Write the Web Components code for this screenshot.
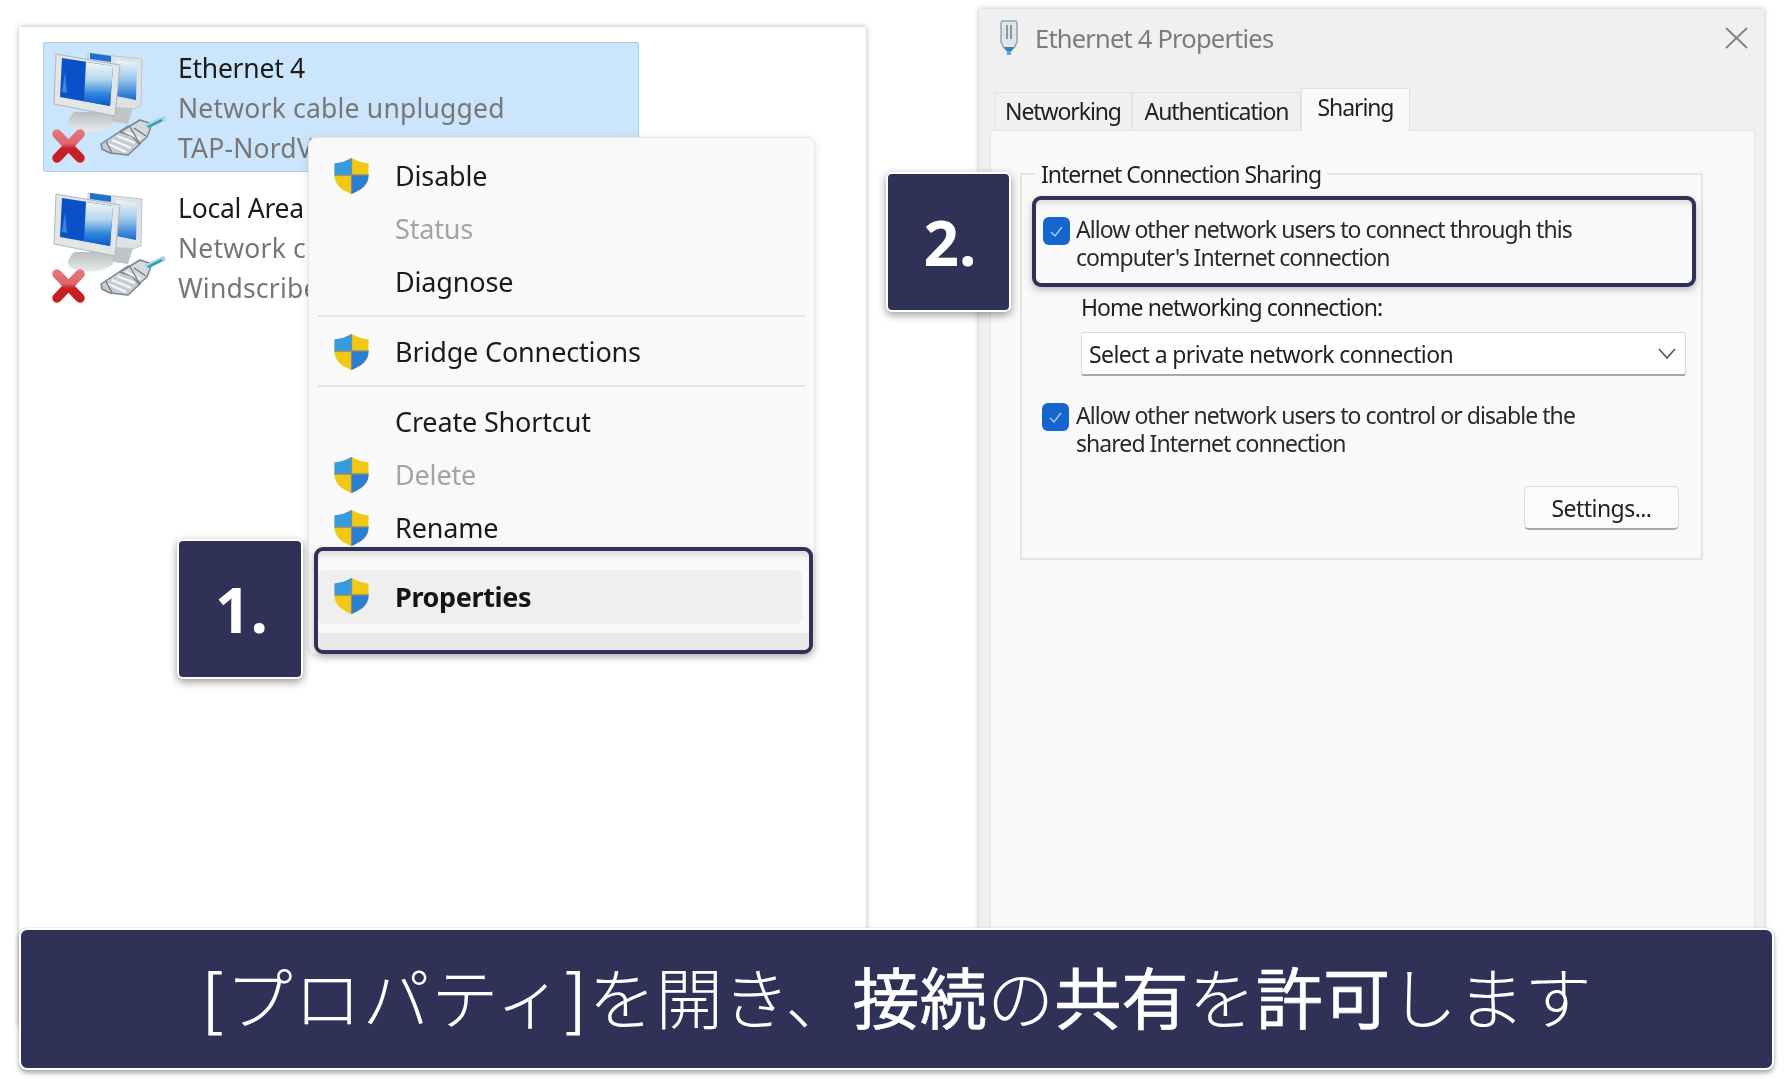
<!DOCTYPE html>
<html lang="ja"><head><meta charset="utf-8"><title>Ethernet 4 Properties</title>
<style>
html,body{margin:0;padding:0;background:#fff}
body{font-family:"Noto Sans","Noto Sans CJK JP",sans-serif}
</style></head><body>
<nc-stage>
  <nc-list-panel>
    <nc-connection selected><span slot="name">Ethernet 4</span><span slot="status">Network cable unplugged</span><span slot="device">TAP-NordV</span></nc-connection>
    <nc-connection><span slot="name">Local Area</span><span slot="status">Network c</span><span slot="device">Windscribe</span></nc-connection>
  </nc-list-panel>
  <nc-menu>
    <nc-item><nc-shield slot="icon"></nc-shield>Disable</nc-item>
    <nc-item disabled>Status</nc-item>
    <nc-item>Diagnose</nc-item>
    <nc-sep></nc-sep>
    <nc-item><nc-shield slot="icon"></nc-shield>Bridge Connections</nc-item>
    <nc-sep></nc-sep>
    <nc-item>Create Shortcut</nc-item>
    <nc-item disabled><nc-shield slot="icon"></nc-shield>Delete</nc-item>
    <nc-item><nc-shield slot="icon"></nc-shield>Rename</nc-item>
    <nc-item-hl><nc-shield slot="icon"></nc-shield>Properties</nc-item-hl>
  </nc-menu>
  <nc-badge style="left:177px;top:539px;width:126px;height:140px">1.</nc-badge>

  <nc-window>
    <nc-tabs slot="tabs">
      <nc-tab style="width:138px">Networking</nc-tab>
      <nc-tab style="width:169px">Authentication</nc-tab>
      <nc-tab active style="width:109px">Sharing</nc-tab>
    </nc-tabs>
    <nc-group>
      <span slot="legend">Internet Connection Sharing</span>
      <nc-outline>
        <nc-check>Allow other network users to connect through this<br>computer's Internet connection</nc-check>
      </nc-outline>
      <nc-field label="Home networking connection:">Select a private network connection</nc-field>
      <nc-check second>Allow other network users to control or disable the<br>shared Internet connection</nc-check>
      <nc-button>Settings...</nc-button>
    </nc-group>
  </nc-window>
  <nc-badge style="left:886px;top:172px;width:125px;height:140px">2.</nc-badge>
  <nc-banner><i><b>[</b>プロパティ<b>]</b></i>を開き、<b>接続</b>の<b>共有</b>を<b>許可</b>します</nc-banner>
</nc-stage>
<script>
const def=(name,html)=>customElements.define(name,class extends HTMLElement{
  constructor(){super();this.attachShadow({mode:'open'}).innerHTML=html}
});
const NAVY='#2f3157';
def('nc-stage',`<style>:host{display:block;position:relative;width:1790px;height:1079px;overflow:hidden;background:#fff;font-family:"Noto Sans","Noto Sans CJK JP",sans-serif}</style><slot></slot>`);
def('nc-list-panel',`<style>:host{position:absolute;left:19px;top:27px;width:847px;height:1000px;box-sizing:border-box;background:#fff;box-shadow:0 0 6px rgba(0,0,0,.28);padding:15px 0 0 24px;display:flex;flex-direction:column;gap:10px}</style><slot></slot>`);
def('nc-connection',`<style>
:host{display:flex;width:596px;height:130px;box-sizing:border-box;border:1px solid transparent;border-radius:2px;color:#1c1c1c}
:host([selected]){background:#cbe6fc;border-color:#a9cfee}
nc-net-icon{flex:none;margin-right:9px}
.t{display:flex;flex-direction:column;font-size:26.5px;line-height:40px;padding-top:5px;white-space:nowrap;letter-spacing:-.25px;filter:blur(.45px)}
.g{color:#777;letter-spacing:.2px}
</style><nc-net-icon></nc-net-icon><div class="t"><div><slot name="name"></slot></div><div class="g"><slot name="status"></slot></div><div class="g"><slot name="device"></slot></div></div>`);
def('nc-net-icon',`<style>:host{display:block;width:125px;height:128px}svg{display:block;filter:blur(.6px)}</style>
<svg width="125" height="128" viewBox="4 3 125 128">
<defs>
<linearGradient id="sw" x1="0" x2="0" y1="0" y2="1"><stop offset="0" stop-color="#f2f7f9"/><stop offset=".4" stop-color="#b4d6ef"/><stop offset=".72" stop-color="#2f86dc"/><stop offset="1" stop-color="#0b58cc"/></linearGradient>
<linearGradient id="sb" x1="0" x2="0" y1="0" y2="1"><stop offset="0" stop-color="#eef5f8"/><stop offset=".45" stop-color="#9fcdee"/><stop offset="1" stop-color="#1668d0"/></linearGradient>
<linearGradient id="st" x1="0" x2="0" y1="0" y2="1"><stop offset="0" stop-color="#b9bec1"/><stop offset="1" stop-color="#e8e9ea"/></linearGradient>
<linearGradient id="xr" x1="0" x2="0" y1="90" y2="122" gradientUnits="userSpaceOnUse"><stop offset="0" stop-color="#e4767c"/><stop offset=".42" stop-color="#e0666c"/><stop offset=".58" stop-color="#c81e26"/><stop offset="1" stop-color="#c81e26"/></linearGradient>
</defs>
<path d="M48 13 102 19 101 66 78 74 48 60Z" fill="#dde2e5" stroke="#bfc6cb"/>
<path d="M50 13 71 16 71 22 50 19Z" fill="#1f6fd0"/>
<path d="M76 20 97 23 96 60 76 56Z" fill="url(#sb)"/>
<path d="M58 66 93 68 88 84 60 80Z" fill="#bfc4c7"/>
<path d="M34 72C29 78 26 82 29 86 37 94 62 93 72 85 76 80 68 75 60 72Z" fill="url(#st)"/>
<path d="M16 14 80 25 75 76 14 64Z" fill="#e3e6e7" stroke="#aeb6bb"/>
<path d="M22 18 73 26 70 66 20 57Z" fill="#0a50c8"/>
<path d="M46 22 73 26 70 66 44 61Z" fill="url(#sw)"/>
<path d="M25 32 22 52 27 53Z" fill="#4a98e6" opacity=".75"/>
<path d="M61 104 88 86 99 90 100 104 88 115 70 113 62 109Z" fill="#c6ccd1" stroke="#7b858d" stroke-width="1.500" stroke-linejoin="round"/>
<path d="M80 92 100 80 112 84 107 97 99 104 92 96Z" fill="#d5dade" stroke="#7b858d" stroke-width="1.500" stroke-linejoin="round"/>
<path d="M68 104 86 112M72 100 91 108M77 96 95 103M86 92 100 99" stroke="#f6f8f9" stroke-width="2"/>
<path d="M66 101 72 113M90 87 100 104M94 88 106 96" stroke="#6f7880" stroke-width="1.300"/>
<path d="M106 87 125 78" stroke="#a8d2ea" stroke-width="5"/>
<path d="M108 87 122 80" stroke="#2a9fa0" stroke-width="2.400"/>
<path d="M17 94 40 118M40 94 17 118" stroke="url(#xr)" stroke-width="9.500" stroke-linecap="round"/>
</svg>`);
def('nc-shield',`<style>:host{display:block;width:35px;height:36px}svg{display:block;filter:blur(.35px)}</style>
<svg width="35" height="36" viewBox="0 0 35 36"><clipPath id="c"><path d="M17.5 0C12 3 7 5 .5 5.5V18C.5 27 8 32 17.5 36 27 32 34.500 27 34.500 18V5.500C28 5 23 3 17.500 0Z"/></clipPath>
<g clip-path="url(#c)"><rect width="35" height="36" fill="#f3c814"/><rect width="17.500" height="17" fill="#339be0"/><rect x="17.500" y="17" width="17.500" height="19" fill="#2b7fd2"/><path d="M17.500 0V36M0 17H35" stroke="#7d8f86" stroke-width="1.300"/></g></svg>`);
def('nc-menu',`<style>:host{position:absolute;left:308px;top:137px;width:507px;height:518px;box-sizing:border-box;background:#f9f9f9;border:1px solid #e6e6e6;border-radius:8px;box-shadow:0 2px 8px rgba(0,0,0,.12);padding:11px 0 0;display:flex;flex-direction:column}</style><slot></slot>`);
const itemCss=`:host{display:flex;align-items:center;height:53px;flex:none;padding-left:25px;font-size:27px;letter-spacing:-.16px;color:#1b1b1b;white-space:nowrap}
.x{filter:blur(.45px)}
.i{width:35px;height:36px;flex:none;margin-right:26px}`;
def('nc-item',`<style>${itemCss}:host([disabled]){color:#a4a4a4}</style><div class="i"><slot name="icon"></slot></div><div class="x"><slot></slot></div>`);
def('nc-sep',`<style>:host{display:block;height:2px;margin:7px 9px 8px;background:#e4e4e4;flex:none}</style>`);
def('nc-item-hl',`<style>:host{position:relative;display:block;margin:-7px 1px 0 5px;height:107px;box-sizing:border-box;border:4px solid ${NAVY};border-radius:9px;background:#f9f9f9;box-shadow:0 3px 7px rgba(0,0,0,.22),inset 0 9px 5px -4px rgba(0,0,0,.09);flex:none;overflow:hidden}
.row{position:absolute;left:0;right:7px;top:19px;height:54px;background:#efefef;border-radius:6px;display:flex;align-items:center;padding-left:16px;font-size:27px;font-weight:700;letter-spacing:-.38px;color:#141414}
.row span{filter:blur(.35px);position:relative;top:-1px}
.low{position:absolute;left:0;right:0;bottom:0;height:17px;background:#e9e9e9}
.i{width:35px;height:36px;flex:none;margin-right:26px;position:relative;top:-1px}</style><div class="row"><div class="i"><slot name="icon"></slot></div><span><slot></slot></span></div><div class="low"></div>`);
def('nc-badge',`<style>:host{position:absolute;box-sizing:border-box;display:flex;align-items:center;justify-content:center;background:${NAVY};color:#fff;border:2px solid #fff;border-radius:6px;box-shadow:0 3px 8px rgba(0,0,0,.4);font-size:62px;font-weight:700;line-height:1;padding:0 0 0 3px}</style><slot></slot>`);
def('nc-window',`<style>:host{position:absolute;left:979px;top:9px;width:785px;height:1000px;box-sizing:border-box;background:#f0f0f0;box-shadow:0 0 5px rgba(0,0,0,.28);display:flex;flex-direction:column}
.title{display:flex;align-items:center;height:58px;flex:none;padding:0 16px 0 20px;color:#7c7c7c;font-size:25.5px;letter-spacing:-.8px}
.title svg{flex:none;margin-right:16px}.title span{flex:1;filter:blur(.45px)}
.tabs{height:63px;flex:none;padding:21px 0 0 15px;box-sizing:border-box;display:flex;align-items:flex-end}
.pane{margin:0 9px 0 11px;flex:1;background:#f9f9f9;border:1px solid #e6e6e6;border-bottom:0;padding:26px 0 0 29px}
</style>
<div class="title"><svg width="20" height="36" viewBox="0 0 20 36"><path d="M3 1h14l1 2v19l-3 6H5L2 22V3Z" fill="#dfe6ea" stroke="#98a2a8" stroke-width="1.500"/><path d="M8 5v14M12 5v14" stroke="#8a98a0" stroke-width="2"/><path d="M5 27h10l-2 4h-6Z" fill="#2f86b8"/><path d="M8 31h4v4H8Z" fill="#5fa6cc"/></svg><span>Ethernet 4 Properties</span><svg style="margin:0" width="23" height="22" viewBox="0 0 23 22"><path d="M1 1 22 21M22 1 1 21" stroke="#808080" stroke-width="1.800" fill="none"/></svg></div>
<div class="tabs"><slot name="tabs"></slot></div>
<div class="pane"><slot></slot></div>`);
def('nc-tabs',`<style>:host{display:flex;align-items:flex-end}</style><slot></slot>`);
def('nc-tab',`<style>:host{display:flex;justify-content:center;align-items:center;box-sizing:border-box;height:37px;background:#f0f0f0;border:1px solid #e2e2e2;border-bottom:0;color:#222;font-size:23px;letter-spacing:-1.100px;margin-bottom:1px;padding-bottom:1px}
:host([active]){height:43px;background:#f9f9f9;margin-bottom:-1px;padding:0 0 7px;position:relative}
span{filter:blur(.45px)}</style><span><slot></slot></span>`);
def('nc-group',`<style>:host{display:block;width:683px}
fieldset{margin:0;border:2px solid #e4e4e4;padding:5px 8px 0 10px;height:403px;box-sizing:border-box;min-width:0;display:flex;flex-direction:column;align-items:flex-start}
legend{margin-left:3px;padding:0 6px;font-size:23px;line-height:34px;letter-spacing:-1px;color:#222;filter:blur(.45px)}
</style><fieldset><legend><slot name="legend"></slot></legend><slot></slot></fieldset>`);
def('nc-outline',`<style>:host{display:block;width:664px;height:91px;box-sizing:border-box;border:4px solid ${NAVY};border-radius:9px;background:#f9f9f9;box-shadow:0 3px 7px rgba(0,0,0,.25),inset 0 8px 6px -5px rgba(0,0,0,.12);padding:15px 0 0 7px}</style><slot></slot>`);
def('nc-check',`<style>:host{display:flex;align-items:flex-start;gap:6px;font-size:23px;line-height:28px;letter-spacing:-.95px;color:#2a2a2a;white-space:nowrap}
:host([second]){margin:25px 0 0 10px;gap:7px}
.b{flex:none;width:27px;height:28px;border-radius:6px;background:#1566cc;margin-top:2px;display:flex;align-items:center;justify-content:center}
.t{filter:blur(.45px)}</style><div class="b"><svg width="15" height="13" viewBox="0 0 15 13"><path d="M2 7l4 4 7-9" stroke="#a9ccf5" stroke-width="1.400" fill="none"/></svg></div><div class="t"><slot></slot></div>`);
def('nc-field',`<style>:host{display:block;margin:5px 0 0 49px;width:605px;font-size:23px;letter-spacing:-.95px;color:#222}
.l{line-height:30px;margin-bottom:10px;filter:blur(.45px)}
.s{display:flex;align-items:center;justify-content:space-between;height:44px;box-sizing:border-box;background:#fff;border:1px solid #d9d9d9;border-bottom:2px solid #a8a8a8;border-radius:3px;padding:0 8px 0 7px;letter-spacing:-.6px}
.s span{filter:blur(.45px)}</style><div class="l">Home networking connection:</div><div class="s"><span><slot></slot></span><svg width="20" height="14" viewBox="0 0 20 14"><path d="M2 2l8 9 8-9" stroke="#5c5c5c" stroke-width="1.800" fill="none"/></svg></div>`);
def('nc-button',`<style>:host{display:flex;align-items:center;justify-content:center;align-self:flex-end;margin:29px 14px 0 0;width:155px;height:44px;box-sizing:border-box;background:#fbfbfb;border:1px solid #dcdcdc;border-bottom:2px solid #a8a8a8;border-radius:5px;font-size:23px;letter-spacing:-.55px;color:#222}
span{filter:blur(.45px)}</style><span><slot></slot></span>`);
def('nc-banner',`<style>:host{position:absolute;left:19px;top:928px;width:1755px;height:142px;box-sizing:border-box;display:flex;align-items:center;justify-content:center;background:${NAVY};color:#fff;border:2px solid #fff;border-radius:8px;box-shadow:0 0 1px #aaa,0 3px 5px rgba(0,0,0,.35);font-family:"Noto Sans CJK JP",sans-serif;font-size:67.2px;font-weight:300;white-space:pre;padding-bottom:10px}
.t{display:block}
::slotted(b){font-weight:400;-webkit-text-stroke:.6px #fff}
::slotted(i){font-style:normal;letter-spacing:1.400px}</style><span class="t"><slot></slot></span>`);
</script>
</body></html>
